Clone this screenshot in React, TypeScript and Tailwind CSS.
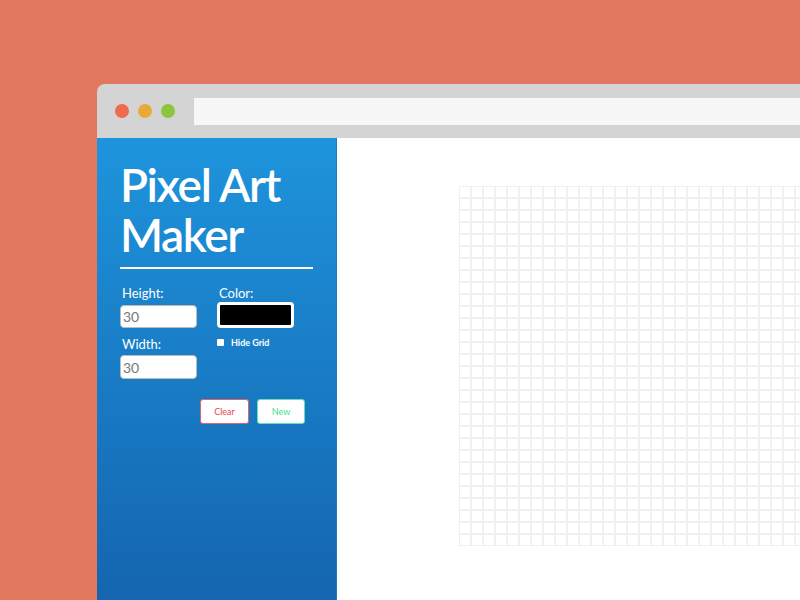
import React from 'react';

const SIZE = 30;

export default function App() {
  const rows = Array.from({ length: SIZE });
  const cols = Array.from({ length: SIZE });

  return (
    <div className="w-[800px] h-[600px] overflow-hidden bg-[#e27860] pl-[97px] pt-[84px] font-['Lato',sans-serif]">
      <div className="w-[720px] h-[516px] flex flex-col rounded-tl-lg overflow-hidden">
        {/* Title bar */}
        <div className="h-[54px] bg-[#d4d4d4] flex items-center pl-[18px] shrink-0">
          <div className="flex gap-[9px]">
            <span className="w-[14px] h-[14px] rounded-full bg-[#ee6c4d]"></span>
            <span className="w-[14px] h-[14px] rounded-full bg-[#e8aa37]"></span>
            <span className="w-[14px] h-[14px] rounded-full bg-[#8cc63f]"></span>
          </div>
          <div className="ml-[19px] flex-1 h-[27px] bg-[#f7f7f7]"></div>
        </div>

        <div className="flex flex-1 min-h-0">
          {/* Sidebar */}
          <div className="w-[240px] shrink-0 bg-gradient-to-b from-[#1e94dc] to-[#1565b0] border-r border-[#1a7cc4] pl-[23px] pr-[24px] pt-[22px] text-white">
            <h1 className="text-[46px] leading-[50px] font-semibold tracking-[-1.4px]">Pixel Art Maker</h1>
            <div className="mt-[7px] h-[2px] bg-white w-[193px]"></div>

            <div className="flex mt-[16px]">
              <div className="w-[97px]">
                <label className="block text-[13px] leading-[16px] pl-[2px]">Height:</label>
                <input
                  readOnly
                  value="30"
                  className="mt-[4px] w-[77px] h-[23px] bg-white rounded border border-[#bbb] px-[2px] text-[14px] text-[#777] outline-none"
                />
                <label className="block text-[13px] leading-[16px] pl-[2px] mt-[8px]">Width:</label>
                <input
                  readOnly
                  value="30"
                  className="mt-[3px] w-[77px] h-[24px] bg-white rounded border border-[#bbb] px-[2px] text-[14px] text-[#777] outline-none"
                />
              </div>
              <div>
                <label className="block text-[13px] leading-[16px] pl-[2px]">Color:</label>
                <div className="mt-[1px] w-[77px] h-[26px] rounded-[4px] border-[3px] border-white bg-black"></div>
                <div className="flex items-center mt-[8px] gap-[7px]">
                  <span className="w-[7px] h-[7px] bg-white rounded-[1px]"></span>
                  <span className="text-[9px] font-bold">Hide Grid</span>
                </div>
              </div>
            </div>

            <div className="flex gap-[8px] mt-[20px] pl-[80px]">
              <button className="w-[49px] h-[25px] bg-white border border-[#e2636b] rounded-[3px] text-[9px] text-[#e8444c]">Clear</button>
              <button className="w-[48px] h-[25px] bg-white border border-[#5fe0c0] rounded-[3px] text-[9px] text-[#3ee08e]">New</button>
            </div>
          </div>

          {/* Canvas */}
          <div className="flex-1 bg-white pl-[122px] pt-[48px] overflow-hidden">
            <div className="flex flex-col w-max">
              {rows.map((_, r) => (
                <div key={r} className="flex">
                  {cols.map((_, c) => (
                    <div key={c} className="w-[12px] h-[12px] border border-[#f0f0f0]"></div>
                  ))}
                </div>
              ))}
            </div>
          </div>
        </div>
      </div>
    </div>
  );
}
